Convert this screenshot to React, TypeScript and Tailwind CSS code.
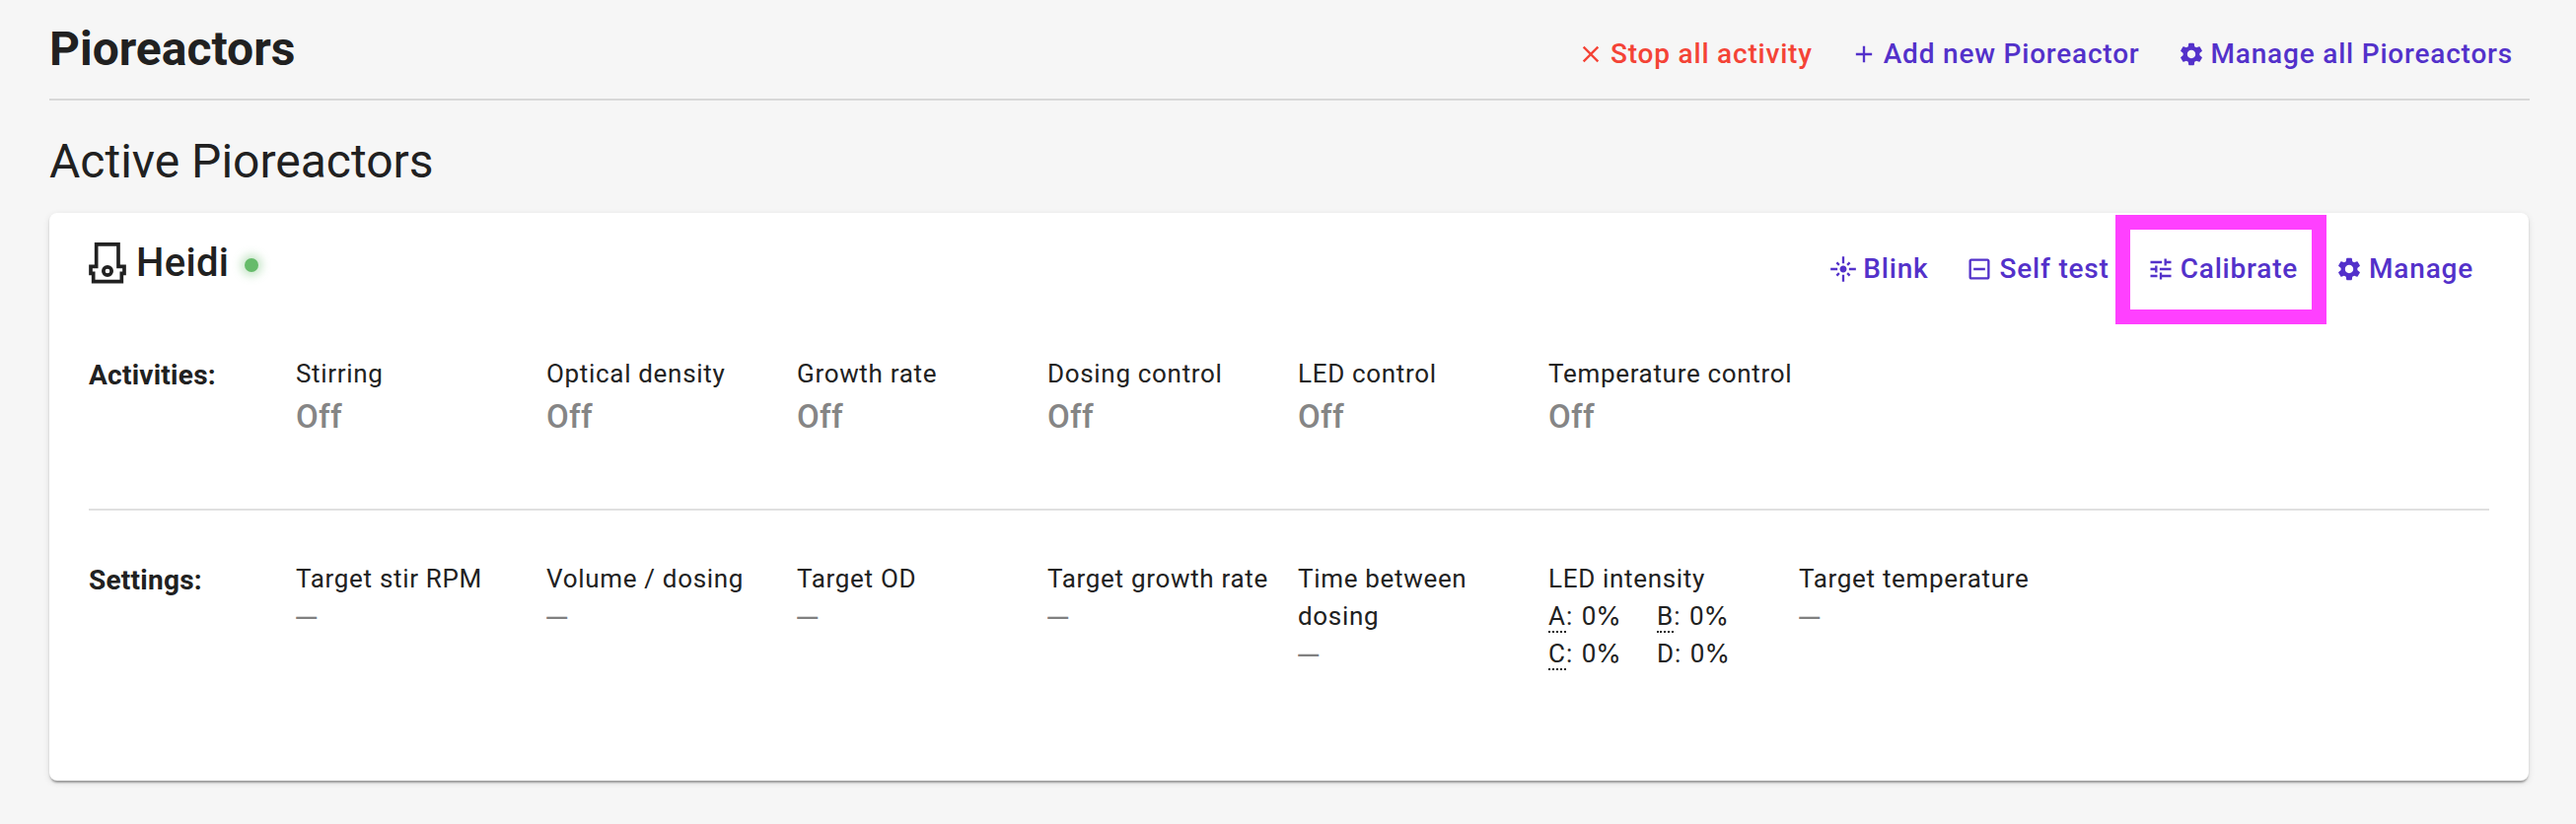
import { ReactNode } from "react";
import { MdAdd, MdClose, MdFlare, MdOutlineIndeterminateCheckBox, MdSettings, MdTune } from "react-icons/md";

function Action({ icon, children, className = "text-[#5331ca]" }: { icon: ReactNode; children: ReactNode; className?: string }) {
  return (
    <button className={`flex items-center gap-1.5 text-[28px] leading-[49px] font-medium tracking-[0.8px] whitespace-nowrap ${className}`}>
      {icon}
      <span>{children}</span>
    </button>
  );
}

function PioreactorIcon() {
  return (
    <svg width="38" height="42" viewBox="180 738 114 126" fill="none" stroke="currentColor">
      <path d="M203 743.5H270V811H288V832H280V857H194V832H186V811H203Z" strokeWidth="11" />
      <circle cx="237" cy="825" r="12.5" strokeWidth="11" />
    </svg>
  );
}

const activities = ["Stirring", "Optical density", "Growth rate", "Dosing control", "LED control", "Temperature control"];
const settings = ["Target stir RPM", "Volume / dosing", "Target OD", "Target growth rate", "Time between dosing"];
const leds = [
  { name: "A", used: true },
  { name: "B", used: true },
  { name: "C", used: true },
  { name: "D", used: false },
];

function RowTitle({ children }: { children: ReactNode }) {
  return <div className="w-[210px] text-[28px] leading-[42px] font-bold tracking-[0.25px]">{children}</div>;
}

function Setting({ label, children }: { label: string; children: ReactNode }) {
  return (
    <div className="w-[254px] text-[26px] leading-[38px] tracking-[0.68px]">
      <div className="max-w-[236px]">{label}</div>
      {children}
    </div>
  );
}

const Empty = () => <div className="mt-0.5 -ml-0.5 text-[32px] leading-[38px] text-[#808080]">—</div>;

export default function App() {
  return (
    <div className="h-[836px] w-[2612px] bg-[#f6f6f6] pt-[18px] pr-[47px] pl-[50px] font-['Roboto',sans-serif] text-[#212121]">
      <header className="flex h-[84px] items-start justify-between border-b-2 border-[#d8d8d8]">
        <h1 className="text-[48px] leading-[64px] font-bold">Pioreactors</h1>
        <div className="mt-3 flex gap-[38px] pr-[17px]">
          <Action icon={<MdClose size={28} />} className="text-[#f44336]">Stop all activity</Action>
          <Action icon={<MdAdd size={28} />}>Add new Pioreactor</Action>
          <Action icon={<MdSettings size={28} />}>Manage all Pioreactors</Action>
        </div>
      </header>

      <h2 className="mt-[30px] text-[48px] leading-[64px]">Active Pioreactors</h2>

      <section className="mt-5 h-[576px] w-[2514px] rounded-lg bg-white px-10 pt-[26px] shadow-[0_4px_2px_-2px_rgba(0,0,0,0.2),0_2px_2px_0_rgba(0,0,0,0.14),0_2px_6px_0_rgba(0,0,0,0.12)]">
        <div className="flex h-[118px] items-start justify-between">
          <div className="flex items-start">
            <div className="mt-1"><PioreactorIcon /></div>
            <h3 className="mt-px ml-2.5 text-[40px] leading-[48px] font-medium tracking-[0.3px]">Heidi</h3>
            <span className="mt-5 ml-4 size-[14px] rounded-full bg-[#66bb6a] shadow-[0_0_8px_4px_rgba(102,187,106,0.35)]" />
          </div>
          <div className="mt-1.5 flex gap-[38px] pr-[16px]">
            <Action icon={<MdFlare size={28} />}>Blink</Action>
            <Action icon={<MdOutlineIndeterminateCheckBox size={28} />}>Self test</Action>
            <div className="relative">
              <Action icon={<MdTune size={28} />}>Calibrate</Action>
              <div className="pointer-events-none absolute -top-[30px] -left-8 h-[111px] w-[214px] border-[15px] border-[#ff40ff]" />
            </div>
            <Action icon={<MdSettings size={28} />}>Manage</Action>
          </div>
        </div>

        <div className="flex h-[156px]">
          <RowTitle>Activities:</RowTitle>
          {activities.map((name) => (
            <div key={name} className="w-[254px] whitespace-nowrap">
              <div className="text-[26px] leading-[38px] tracking-[0.68px]">{name}</div>
              <div className="text-[33px] leading-[50px] font-medium tracking-[0.3px] text-[#858585]">Off</div>
            </div>
          ))}
        </div>

        <hr className="border-t-2 border-[#e0e0e0]" />

        <div className="flex pt-[50px]">
          <RowTitle>Settings:</RowTitle>
          {settings.map((name) => (
            <Setting key={name} label={name}><Empty /></Setting>
          ))}
          <Setting label="LED intensity">
            <div className="grid grid-cols-[110px_110px] tracking-[1px]">
              {leds.map(({ name, used }) => (
                <div key={name} className="h-[38px] whitespace-nowrap">
                  <span className={used ? "border-b-2 border-dotted border-[#212121]" : ""}>{name}</span>
                  {": "}
                  <span className="ml-px">0</span>
                  <span className="-ml-px font-['Inter',sans-serif]">%</span>
                </div>
              ))}
            </div>
          </Setting>
          <Setting label="Target temperature"><Empty /></Setting>
        </div>
      </section>
    </div>
  );
}
